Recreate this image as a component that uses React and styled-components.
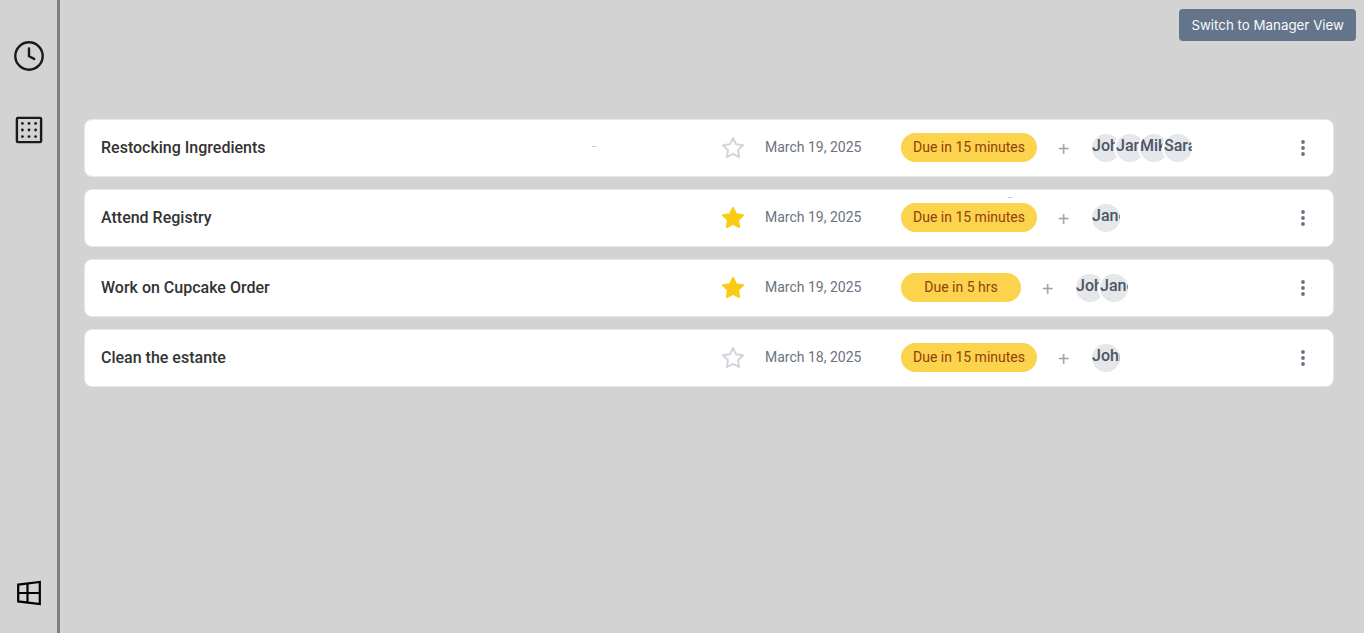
import React, { useState } from "react";
import styled, { createGlobalStyle } from "styled-components";

const GlobalStyle = createGlobalStyle`
  *, *::before, *::after { box-sizing: border-box; }
  body {
    margin: 0;
    background: #d3d3d3;
    font-family: Roboto, "Liberation Sans", sans-serif;
  }
  button { cursor: pointer; }
`;

const Page = styled.div`
  display: flex;
  min-height: 100vh;
`;

const Sidebar = styled.nav`
  display: flex;
  flex-direction: column;
  justify-content: space-between;
  width: 60px;
  flex-shrink: 0;
  padding: 40px 12px 24px 13px;
  border-right: 3px solid #808080;
`;

const NavGroup = styled.div`
  display: flex;
  flex-direction: column;
  gap: 42px;
`;

const NavLink = styled.a`
  display: block;
  width: 32px;
  height: 32px;
  color: ${(p) => p.$color || "#1a1a1a"};

  svg { display: block; }
`;

const Content = styled.div`
  flex: 1;
  min-width: 0;
`;

const TopBar = styled.header`
  display: flex;
  justify-content: flex-end;
  padding: 9px 8px 0 0;
`;

const ViewButton = styled.button`
  height: 32px;
  padding: 0 12px;
  border: 0;
  border-radius: 4px;
  background: #64748b;
  color: #f8fafc;
  font-family: Inter, "Liberation Sans", sans-serif;
`;

const TaskList = styled.main`
  display: flex;
  flex-direction: column;
  gap: 12px;
  padding: 78px 30px 24px 24px;
`;

const TaskCard = styled.article`
  position: relative;
  display: grid;
  grid-template-columns: 1fr 24px 116px 368px 28px;
  column-gap: 20px;
  align-items: center;
  height: 58px;
  padding: 0 16px;
  border: 1px solid #e2e8f0;
  border-radius: 8px;
  background: #fff;
`;

const Title = styled.h2`
  margin: 0;
  font-size: 16px;
  font-weight: 500;
  line-height: 24px;
  color: #333;
`;

const IconButton = styled.button`
  display: flex;
  align-items: center;
  justify-content: center;
  height: 24px;
  padding: 0;
  border: 0;
  background: none;
  color: ${(p) => p.$color};
`;

const DateText = styled.time`
  padding-bottom: 2px;
  font-size: 14px;
  line-height: 20px;
  color: #6b7280;
`;

const Status = styled.div`
  display: flex;
  align-items: center;
`;

const DuePill = styled.span`
  min-width: 120px;
  margin-bottom: 1px;
  padding: 4px 12px;
  border-radius: 16px;
  background: #fcd34d;
  color: #92400e;
  font-size: 14px;
  line-height: 21px;
  text-align: center;
  white-space: nowrap;
`;

const AddButton = styled.button`
  width: 21px;
  margin: 0 16px;
  padding: 2px 0 0;
  border: 0;
  background: none;
  color: #9ca3af;
  font-family: "Liberation Sans", sans-serif;
  font-size: 20px;
  line-height: 24px;
`;

const Avatars = styled.div`
  display: flex;
`;

const Avatar = styled.span`
  width: 32px;
  height: 32px;
  border: 2px solid #fff;
  border-radius: 50%;
  background: #e5e7eb;
  overflow: hidden;
  color: #4b5563;
  font-size: 16px;
  font-weight: 500;
  line-height: 24px;
  white-space: nowrap;

  & + & { margin-left: -8px; }
`;

const Speck = styled.span`
  position: absolute;
  left: ${(p) => p.$left};
  top: ${(p) => p.$top};
  width: 4px;
  height: 1px;
  background: #c8c8c8;
`;

const ClockIcon = () => (
  <svg width="32" height="32" viewBox="0 0 32 32" fill="none" stroke="currentColor" strokeWidth="2.4" strokeLinecap="round" strokeLinejoin="round">
    <circle cx="16" cy="16" r="13.7" />
    <path d="M16 8.4V16.3L21.2 18.9" />
  </svg>
);

const GridIcon = () => (
  <svg width="32" height="32" viewBox="0 0 32 32" fill="none" stroke="currentColor" strokeWidth="2.4">
    <rect x="3.9" y="3.9" width="24.2" height="24.2" rx="1" />
    {[9.4, 16, 22.6].map((y) =>
      [9.4, 16, 22.6].map((x) => <circle key={`${x}-${y}`} cx={x} cy={y} r="1.4" fill="currentColor" stroke="none" />)
    )}
  </svg>
);

const WindowsIcon = () => (
  <svg width="32" height="32" viewBox="0 0 32 32" fill="none" stroke="currentColor" strokeWidth="2.2">
    <path d="M5.2 7.6L26.8 5V27L5.2 24.4ZM5.2 16H26.8M14.5 6.6V25.4" />
  </svg>
);

const StarIcon = ({ filled }) => (
  <svg width="24" height="24" viewBox="0 0 24 24" fill={filled ? "currentColor" : "none"} stroke="currentColor" strokeWidth="2" strokeLinecap="round" strokeLinejoin="round">
    <polygon points="12 2 15.09 8.26 22 9.27 17 14.14 18.18 21.02 12 17.77 5.82 21.02 7 14.14 2 9.27 8.91 8.26 12 2" />
  </svg>
);

const DotsIcon = () => (
  <svg width="24" height="24" viewBox="0 0 24 24" fill="currentColor">
    <circle cx="12" cy="6" r="1.9" />
    <circle cx="12" cy="12" r="1.9" />
    <circle cx="12" cy="18" r="1.9" />
  </svg>
);

const initialTasks = [
  { title: "Restocking Ingredients", starred: false, date: "March 19, 2025", due: "Due in 15 minutes", people: ["John", "Jane", "Mike", "Sara"], speck: ["507px", "26px"] },
  { title: "Attend Registry", starred: true, date: "March 19, 2025", due: "Due in 15 minutes", people: ["Jane"], speck: ["923px", "7px"] },
  { title: "Work on Cupcake Order", starred: true, date: "March 19, 2025", due: "Due in 5 hrs", people: ["John", "Jane"] },
  { title: "Clean the estante", starred: false, date: "March 18, 2025", due: "Due in 15 minutes", people: ["John"] },
];

export default function App() {
  const [tasks, setTasks] = useState(initialTasks);
  const toggleStar = (index) =>
    setTasks(tasks.map((t, i) => (i === index ? { ...t, starred: !t.starred } : t)));

  return (
    <>
      <GlobalStyle />
      <Page>
        <Sidebar>
          <NavGroup>
            <NavLink href="#clock" aria-label="Clock"><ClockIcon /></NavLink>
            <NavLink href="#grid" aria-label="Grid"><GridIcon /></NavLink>
          </NavGroup>
          <NavLink href="#windows" aria-label="Windows" $color="#000"><WindowsIcon /></NavLink>
        </Sidebar>
        <Content>
          <TopBar>
            <ViewButton type="button">Switch to Manager View</ViewButton>
          </TopBar>
          <TaskList>
            {tasks.map((task, index) => (
              <TaskCard key={task.title}>
                <Title>{task.title}</Title>
                <IconButton type="button" aria-label="Star" aria-pressed={task.starred} $color={task.starred ? "#facc15" : "#d1d5db"} onClick={() => toggleStar(index)}>
                  <StarIcon filled={task.starred} />
                </IconButton>
                <DateText>{task.date}</DateText>
                <Status>
                  <DuePill>{task.due}</DuePill>
                  <AddButton type="button" aria-label="Add person">+</AddButton>
                  <Avatars>
                    {task.people.map((name) => <Avatar key={name}>{name}</Avatar>)}
                  </Avatars>
                </Status>
                <IconButton type="button" aria-label="More" $color="#6b7280"><DotsIcon /></IconButton>
                {task.speck && <Speck $left={task.speck[0]} $top={task.speck[1]} />}
              </TaskCard>
            ))}
          </TaskList>
        </Content>
      </Page>
    </>
  );
}
